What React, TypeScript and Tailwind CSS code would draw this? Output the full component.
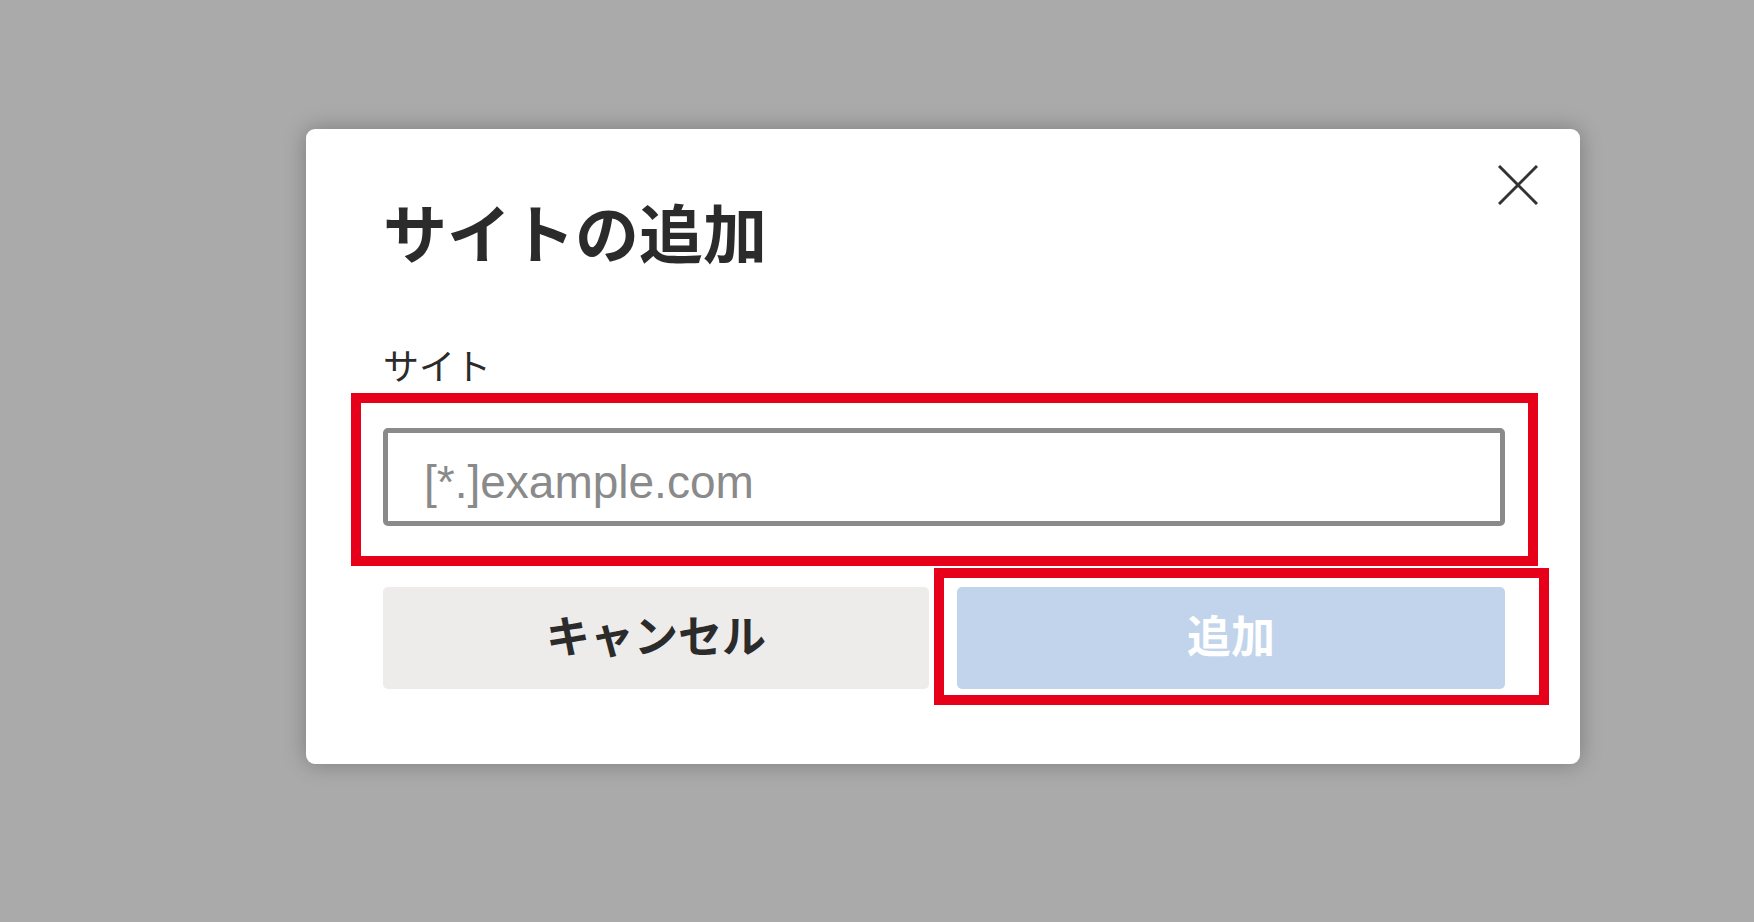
import { useState } from "react";

const jp = { fontFamily: '"Noto Sans CJK JP", "Noto Sans", sans-serif' };

export default function App() {
  const [site, setSite] = useState("");

  return (
    <div className="w-full h-[922px] bg-[#aaaaaa] overflow-hidden pt-[129px] pl-[306px]" style={jp}>
      <div className="relative w-[1274px] h-[635px] bg-white rounded-[9px] shadow-[0_0_22px_rgba(0,0,0,0.28)] pt-[69px] pl-[77px] pr-[75px] pb-[75px] flex flex-col">
        {/* close */}
        <button className="absolute top-[36px] right-[42px] w-[40px] h-[40px] flex items-center justify-center text-[#333333]">
          <svg width="40" height="40" viewBox="0 0 40 40" fill="none" stroke="currentColor" strokeWidth="3">
            <line x1="1" y1="1" x2="39" y2="39" />
            <line x1="39" y1="1" x2="1" y2="39" />
          </svg>
        </button>

        <h1 className="text-[64px] leading-none font-bold text-[#2b2b2b] h-[64px]">サイトの追加</h1>

        <label className="mt-[84px] text-[36px] leading-none text-[#2b2b2b] h-[36px]">サイト</label>

        <input
          value={site}
          onChange={(e) => setSite(e.target.value)}
          placeholder="[*.]example.com"
          className="mt-[46px] h-[98px] w-full border-[5px] border-[#8a8a8a] rounded-[5px] pl-[36px] pr-4 pt-[9px] text-[46px] text-[#2b2b2b] placeholder:text-[#8a8a8a] outline-none"
          style={{ fontFamily: '"Liberation Sans", Arial, sans-serif' }}
        />

        <div className="mt-[61px] flex gap-[28px]">
          <button className="w-[546px] h-[102px] rounded-[5px] bg-[#edecea] pb-[8px] text-[44px] font-bold text-[#2b2b2b] flex items-center justify-center">
            キャンセル
          </button>
          <button disabled className="w-[548px] h-[102px] rounded-[5px] bg-[#c1d4eb] pb-[8px] text-[44px] font-bold text-white flex items-center justify-center">
            追加
          </button>
        </div>

        {/* annotation boxes */}
        <div className="absolute left-[45px] top-[264px] w-[1187px] h-[173px] border-[10px] border-[#e60019] pointer-events-none" />
        <div className="absolute left-[628px] top-[439px] w-[615px] h-[137px] border-[10px] border-[#e60019] pointer-events-none" />
      </div>
    </div>
  );
}
